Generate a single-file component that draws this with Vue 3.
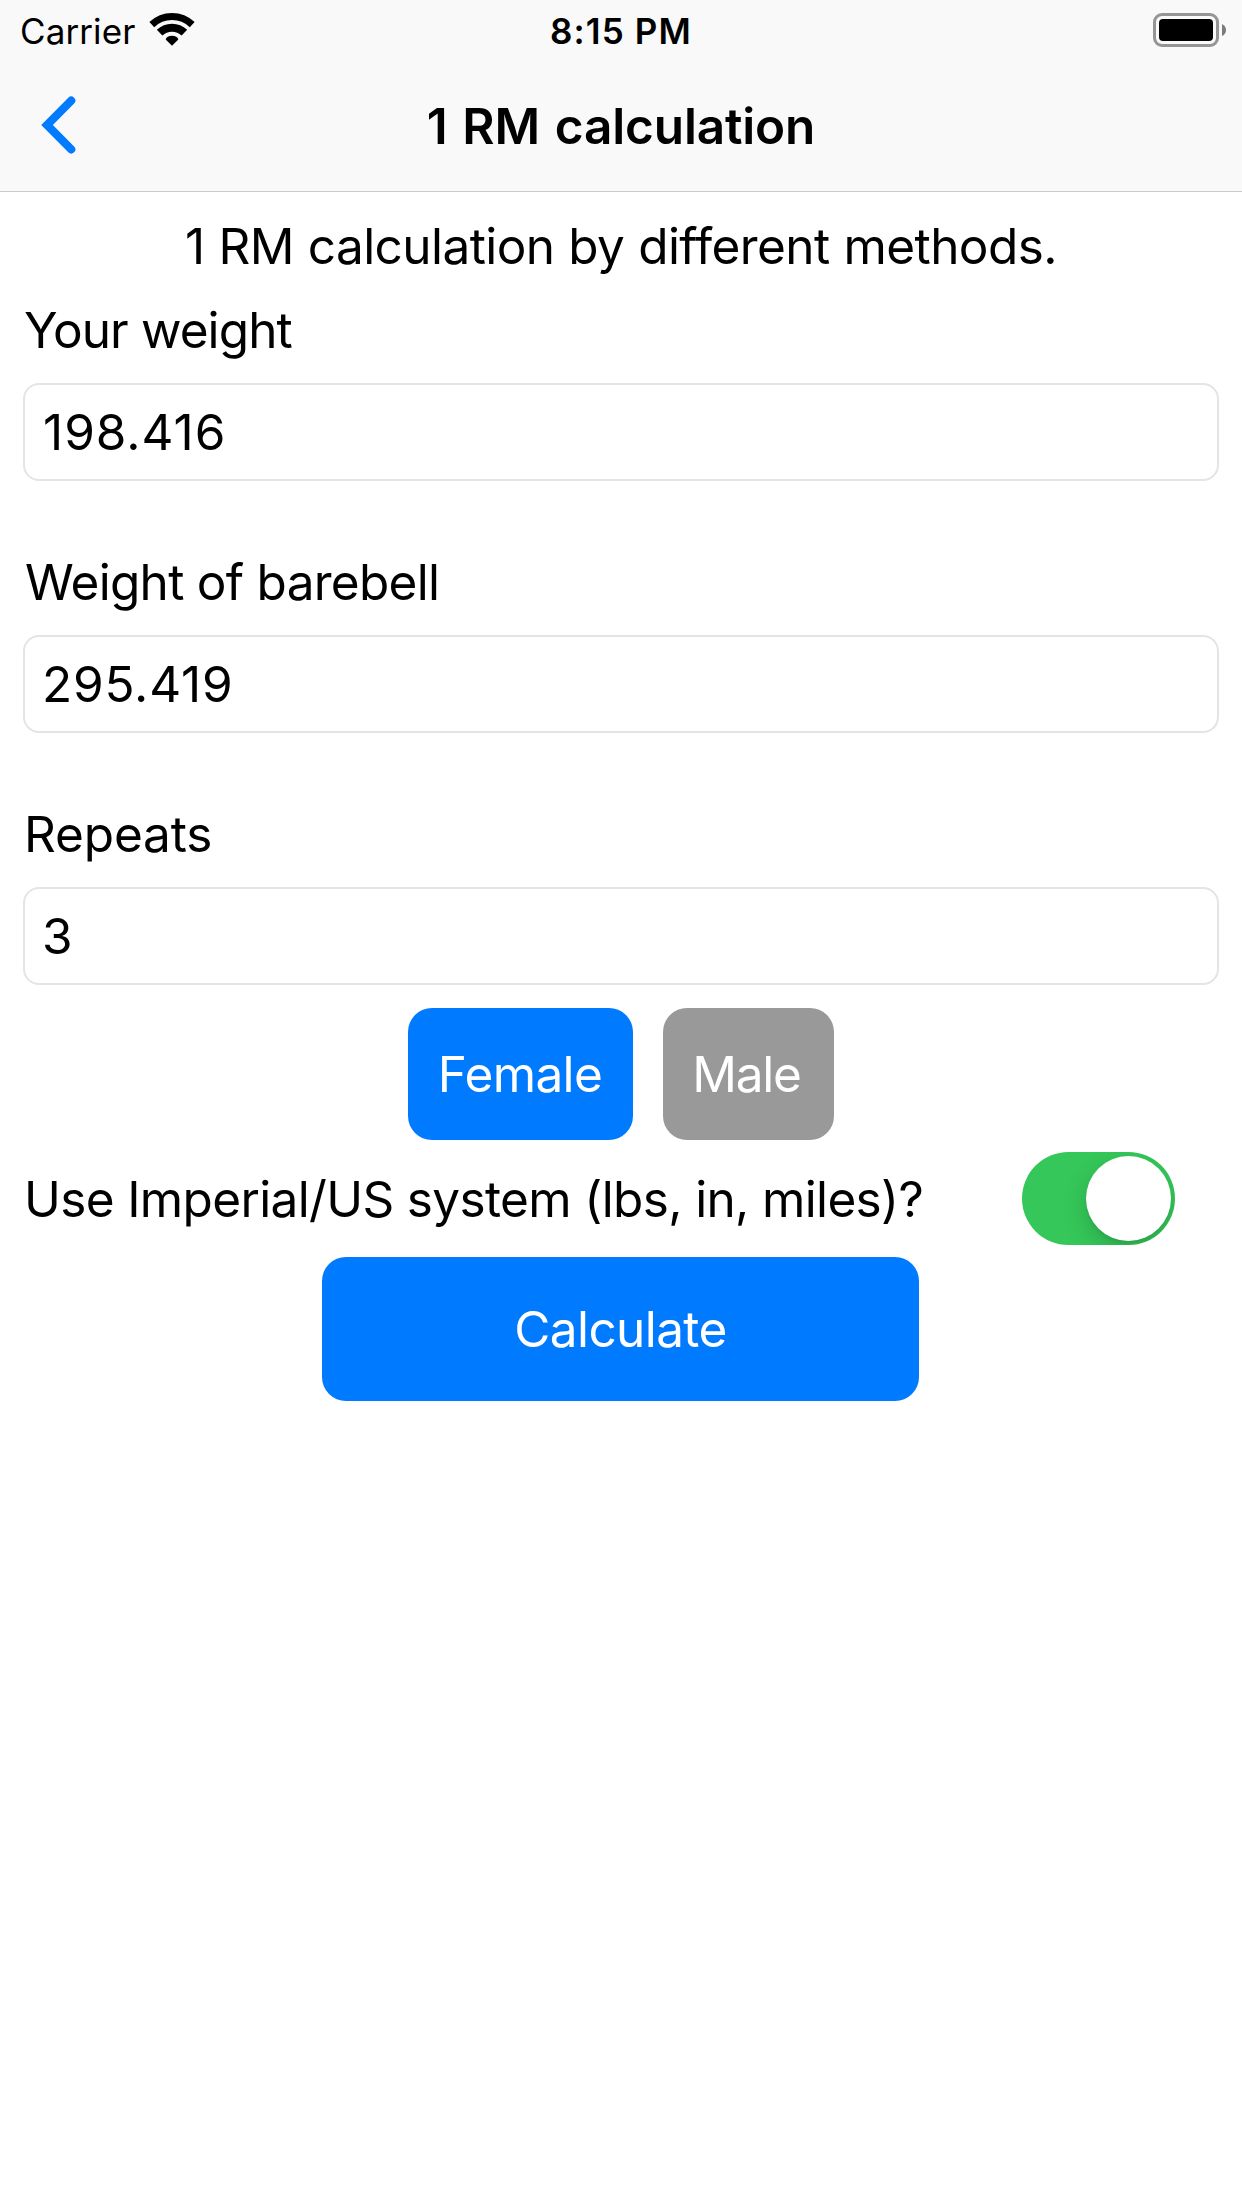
<script setup>
import { reactive, ref } from 'vue'

const fields = reactive([
  { id: 'body', label: 'Your weight', value: '198.416' },
  { id: 'bar', label: 'Weight of barebell', value: '295.419' },
  { id: 'reps', label: 'Repeats', value: '3' }
])
const gender = ref('female')
const imperial = ref(true)
</script>

<template>
  <div class="screen">
    <header class="header">
      <div class="status">
        <div class="network">
          <span class="carrier">Carrier</span>
          <svg class="wifi" width="48" height="37" viewBox="-24 -34.7 48 37" fill="none" stroke="#000">
            <path d="M-20.2 -21.1A29.2 29.2 0 0 1 20.2 -21.1" stroke-width="7" />
            <path d="M-12.4 -13.1A18 18 0 0 1 12.4 -13.1" stroke-width="8" />
            <path d="M0 0L-6.3 -6.3Q-5.2 -10 0 -10Q5.2 -10 6.3 -6.3Z" fill="#000" stroke="none" />
          </svg>
        </div>
        <span class="time">8:15 PM</span>
        <svg class="battery" width="73" height="34" viewBox="0 0 73 34">
          <rect x="1.5" y="1.5" width="63" height="31" rx="7.5" fill="none" stroke="#959595" stroke-width="3" />
          <rect x="6" y="6" width="54" height="22" rx="4" />
          <path d="M69 11Q73 13 73 17Q73 21 69 23Z" fill="#7c7c7c" />
        </svg>
      </div>
      <nav class="nav">
        <button class="back" aria-label="Back">
          <svg width="40" height="60" viewBox="0 0 40 60" fill="none" stroke="#007aff" stroke-width="8.2" stroke-linecap="round">
            <path d="M31.2 5.6L7 30L31.2 54.4" />
          </svg>
        </button>
        <h1 class="title">1 RM calculation</h1>
      </nav>
    </header>

    <main class="content">
      <p class="intro">1 RM calculation by different methods.</p>
      <div v-for="f in fields" :key="f.id" class="field" :class="f.id">
        <label :for="f.id">{{ f.label }}</label>
        <input :id="f.id" v-model="f.value" type="text" />
      </div>

      <div class="genders">
        <button class="choice female" :class="{ on: gender === 'female' }" @click="gender = 'female'">Female</button>
        <button class="choice male" :class="{ on: gender === 'male' }" @click="gender = 'male'">Male</button>
      </div>

      <div class="units">
        <span>Use Imperial/US system (lbs, in, miles)?</span>
        <button class="switch" :class="{ on: imperial }" role="switch" :aria-checked="imperial" @click="imperial = !imperial">
          <i class="thumb"></i>
        </button>
      </div>

      <button class="calculate">Calculate</button>
    </main>
  </div>
</template>

<style>
body {
  background: #fff;
}
</style>

<style scoped>
.screen {
  min-height: 2208px;
  background: #fff;
  color: #000;
  font-family: Inter, "Liberation Sans", sans-serif;
  font-size: 49.5px;
  line-height: 60px;
}
button {
  border: 0;
  padding: 0;
  font: inherit;
  color: inherit;
}
.header {
  background: #f9f9f9;
  border-bottom: 1px solid #cbcbcb;
}
.status {
  display: grid;
  grid-template-columns: 1fr auto 1fr;
  align-items: center;
  height: 63px;
  padding: 0 16px 0 20px;
  font-size: 35px;
  line-height: 63px;
}
.network {
  display: flex;
  align-items: center;
  gap: 13px;
}
.carrier {
  letter-spacing: 0.1px;
}
.wifi {
  margin-bottom: 4px;
}
.time {
  font-weight: 580;
  letter-spacing: 1.1px;
  margin-right: 4px;
}
.battery {
  justify-self: end;
  margin-bottom: 3px;
}
.nav {
  display: grid;
  grid-template-columns: 120px 1fr 120px;
  align-items: center;
  height: 128px;
  padding-bottom: 2px;
  box-sizing: border-box;
}
.back {
  display: flex;
  padding-left: 40px;
  margin-bottom: 2px;
  background: none;
}
.title {
  margin: 0;
  text-align: center;
  font-size: 49.5px;
  font-weight: 580;
  letter-spacing: -0.15px;
  word-spacing: 2.5px;
}
.content {
  display: flex;
  flex-direction: column;
  padding: 24px 23px 0;
}
.intro {
  margin: 0 0 24px;
  text-align: center;
  letter-spacing: -0.57px;
  word-spacing: 0.5px;
}
.field {
  display: flex;
  flex-direction: column;
  gap: 23px;
  margin-bottom: 71px;
}
.field label {
  padding-left: 1px;
}
.field input {
  box-sizing: border-box;
  width: 100%;
  height: 98px;
  padding: 0 17px;
  border: 2px solid #e4e4e4;
  border-radius: 16px;
  outline: 0;
  background: #fff;
  color: #000;
  font: inherit;
}
.body label {
  letter-spacing: -0.88px;
}
.body input {
  padding-left: 18px;
  letter-spacing: 1px;
}
.bar label {
  padding-left: 2px;
  letter-spacing: -0.72px;
}
.bar input {
  letter-spacing: 0.82px;
}
.reps label {
  letter-spacing: -0.14px;
}
.reps {
  margin-bottom: 23px;
}
.genders {
  display: flex;
  justify-content: center;
  gap: 30px;
}
.choice {
  height: 132px;
  border-radius: 24px;
  background: #999;
  color: #fff;
}
.choice.on {
  background: #007aff;
}
.female {
  width: 225px;
  padding-right: 1px;
  letter-spacing: -0.6px;
}
.male {
  width: 171px;
  padding-right: 4px;
  letter-spacing: -1.27px;
}
.units {
  display: flex;
  justify-content: space-between;
  align-items: center;
  margin-top: 12px;
  padding: 0 44px 0 1px;
  line-height: 93px;
  letter-spacing: -0.64px;
}
.units span {
  padding-top: 1px;
  margin-bottom: -1px;
}
.switch {
  display: flex;
  box-sizing: border-box;
  width: 153px;
  height: 93px;
  padding: 4px;
  overflow: hidden;
  border-radius: 47px;
  background: #e9e9ea;
}
.switch.on {
  justify-content: flex-end;
  background: #35c759;
}
.thumb {
  width: 85px;
  height: 85px;
  border-radius: 50%;
  background: #fff;
  box-shadow: 0 9px 24px rgba(0, 0, 0, 0.17), 0 3px 3px rgba(0, 0, 0, 0.06);
}
.calculate {
  align-self: center;
  width: 597px;
  height: 144px;
  margin-top: 12px;
  margin-right: 1px;
  border-radius: 24px;
  background: #007aff;
  color: #fff;
  letter-spacing: -0.61px;
}
</style>
